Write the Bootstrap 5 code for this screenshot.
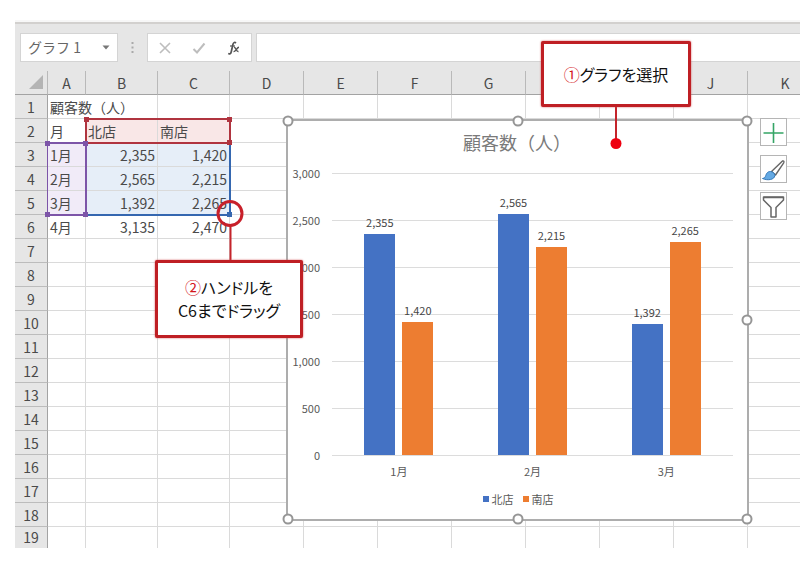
<!DOCTYPE html>
<html lang="ja">
<head>
<meta charset="utf-8">
<meta name="viewport" content="width=device-width, initial-scale=1">
<title>顧客数（人）</title>
<link href="https://cdn.jsdelivr.net/npm/bootstrap@5.3.0/dist/css/bootstrap.min.css" rel="stylesheet">
<style>
body { font-family: "Noto Sans CJK JP", sans-serif; font-size: 14px; color: #4a4a4a; background: #fff; }
.app { margin: 20px 0 15px 15px; background: #e6e6e6; overflow: hidden; }
.ribbon-edge { height: 4px; background: #f7f7f7; border-bottom: 2px solid #d2d0ce; }
.formula-row { padding: 9px 0 9px 5px; height: 47px; }
.field { background: #fff; border: 1px solid #d4d4d4; height: 29px; }
.name-box { width: 98px; }
.name-box input { width: 74px; padding: 0 0 0 7px; font-size: 14px; line-height: 27px; color: #666; }
.fx-box { width: 105px; }
.plain { border: 0; background: transparent; padding: 0; outline: 0; }
.grip { width: 29px; }
.formula { margin-left: 4px; min-width: 0; border-right: 0; border-radius: 0; padding: 0 8px; }

.sheet { background: #fff; }
.grid { table-layout: fixed; width: 100%; border-collapse: separate; border-spacing: 0; }
.grid th, .grid td { height: 24px; padding: 0 2px; line-height: 22px; border-right: 1px solid #dadada; border-bottom: 1px solid #dadada; white-space: nowrap; overflow: visible; }
.grid th { background: #e6e6e6; font-weight: 400; text-align: center; color: #4a4a4a; }
.grid thead th { border-bottom-color: #a3a3a3; border-right-color: #b9b9b9; }
.grid tbody th { border-right-color: #a3a3a3; border-bottom-color: #bcbcbc; }
.grid tr > :last-child { border-right: 0; }
.grid tbody tr:last-child > * { height: 21px; line-height: 21px; border-bottom: 0; }
.grid .num { text-align: right; }
.grid .no-edge { border-right-color: transparent; }
.c-head { width: 33px; } .c-a { width: 38px; } .c-b { width: 72px; } .c-std { width: 74px; }
.fill-name { background: #f9e7e7; }
.fill-cat { background: #f1ebf8; }
.fill-val { background: #e6eef8; }

.range { position: absolute; border: 2px solid; }
.range i { position: absolute; width: 5px; height: 5px; background: currentColor; }
.range .tl { left: -3px; top: -3px; } .range .tr { right: -3px; top: -3px; }
.range .bl { left: -3px; bottom: -3px; } .range .br { right: -3px; bottom: -3px; }
.range-cat { left: 32px; top: 71px; width: 40px; height: 74px; color: #7d55a8; border-left-width: 1px; }
.range-val { left: 70px; top: 71px; width: 146px; height: 74px; color: #3567b0; border-left: 0; }
.range-name { left: 70px; top: 47px; width: 146px; height: 26px; color: #b0343f; }

.chart { position: absolute; left: 271px; top: 48px; width: 463px; background: #fff; border: 2px solid #adadad; font-size: 11px; line-height: 16px; color: #595959; padding: 9px 14px 12px 1px; }
.chart-title { font-size: 18px; font-weight: 400; line-height: 24px; margin: 0 0 11px 12px; color: #7a7a7a; }
.y-axis { width: 31px; height: 298px; }
.plot { margin: 8px 0 7px 12px; }
.plot > * { grid-area: 1 / 1; }
.rule { height: 47px; border-top: 1px solid #dcdcdc; }
.rule:last-child { height: 1px; }
.bars { height: 282px; }
.cluster { gap: 7px; }
.bar-slot { width: 31px; height: 100%; }
.bar-value { margin-bottom: 4px; color: #454545; }
.bar { width: 31px; }
.north { background: #4472c4; } .south { background: #ed7d31; }
.x-axis { margin-left: 43px; }
.legend-row { margin: 12px 0 0 14px; gap: 9px; }
.key { width: 6px; height: 6px; margin-right: 3px; }
.knob { position: absolute; width: 11px; height: 11px; border: 2px solid #969696; border-radius: 50%; background: #fff; transform: translate(-50%, -50%); }

.chart-tools { position: absolute; left: 745px; top: 47px; gap: 9px; }
.chart-tools button { width: 27px; height: 28px; padding: 0; border: 1px solid #b5b5b5; border-radius: 0; background: #fff; line-height: 0; }

.callout { position: absolute; background: #fff; border: 3px solid #bf1f24; border-radius: 2px; box-shadow: 0 0 2px #d05055; color: #111; font-size: 16px; line-height: 23px; font-feature-settings: "palt"; text-align: center; }
.callout b { font-weight: 400; color: #d3161c; }
.callout-1 { left: 541px; top: 41px; width: 150px; height: 66px; }
.callout-2 { left: 155px; top: 260px; width: 148px; height: 78px; }
.pointer { position: absolute; pointer-events: none; }
.pointer-1 { left: 608px; top: 106px; }
.pointer-2 { left: 215px; top: 198px; }
</style>
<script src="https://cdn.jsdelivr.net/npm/bootstrap@5.3.0/dist/js/bootstrap.bundle.min.js"></script>
</head>
<body>
<main class="position-relative overflow-hidden">
<div class="app">
  <div class="ribbon-edge"></div>
  <div class="formula-row d-flex align-items-start">
    <div class="field name-box d-flex align-items-center">
      <input class="plain" type="text" value="グラフ 1" aria-label="名前ボックス">
      <button class="plain flex-fill d-flex justify-content-center" type="button" aria-label="名前の一覧">
        <svg width="8" height="5" viewBox="0 0 8 5"><path d="M.5.5h7L4 4.5z" fill="#777"/></svg>
      </button>
    </div>
    <svg class="grip" height="29" viewBox="0 0 29 29"><path d="M14.5 9v12" stroke="#aaa" stroke-width="2" stroke-dasharray="2 2.5"/></svg>
    <div class="field fx-box d-flex align-items-center justify-content-around">
      <button class="plain d-flex" type="button" aria-label="キャンセル"><svg width="14" height="14" viewBox="0 0 14 14"><path d="M2 2l10 10M12 2L2 12" stroke="#bdbdbd" stroke-width="1.6"/></svg></button>
      <button class="plain d-flex" type="button" aria-label="入力"><svg width="14" height="14" viewBox="0 0 14 14"><path d="M1.500 8l3.500 3.500L12.500 2.500" fill="none" stroke="#bdbdbd" stroke-width="2"/></svg></button>
      <button class="plain d-flex" type="button" aria-label="関数の挿入"><svg width="14" height="14" viewBox="0 0 14 14" fill="none" stroke="#555"><path d="M9 2C7.500.8 6.300 1.700 5.900 3.500L4.200 11c-.4 1.700-1.500 2.200-3 1.500" stroke-width="1.700"/><path d="M3 5h5" stroke-width="1.200"/><path d="M7 6.500c2-.8 2 4.500 4.500 4M12 6.300c-2 0-3.500 4.700-5.500 4.300" stroke-width="1.400"/></svg></button>
    </div>
    <input class="field formula flex-fill" type="text" aria-label="数式バー">
  </div>

  <div class="sheet position-relative">
    <table class="grid">
      <colgroup><col class="c-head"><col class="c-a"><col class="c-b"><col class="c-b"><col class="c-std"><col class="c-std"><col class="c-std"><col class="c-std"><col class="c-std"><col class="c-std"><col class="c-std"><col></colgroup>
      <thead><tr>
        <th aria-label="すべて選択"><svg class="d-block ms-auto" width="17" height="15" viewBox="0 0 17 15"><path d="M15 0v14H1z" fill="#b4b4b4"/></svg></th>
        <th>A</th><th>B</th><th>C</th><th>D</th><th>E</th><th>F</th><th>G</th><th aria-label="H"></th><th aria-label="I"></th><th>J</th><th class="ps-4">K</th>
      </tr></thead>
      <tbody id="cells">
        <tr><th>1</th><td class="no-edge">顧客数（人）</td><td></td><td></td></tr>
        <tr><th>2</th><td>月</td><td class="fill-name">北店</td><td class="fill-name">南店</td></tr>
        <tr><th>3</th><td class="fill-cat">1月</td><td class="fill-val num">2,355</td><td class="fill-val num">1,420</td></tr>
        <tr><th>4</th><td class="fill-cat">2月</td><td class="fill-val num">2,565</td><td class="fill-val num">2,215</td></tr>
        <tr><th>5</th><td class="fill-cat">3月</td><td class="fill-val num">1,392</td><td class="fill-val num">2,265</td></tr>
        <tr><th>6</th><td>4月</td><td class="num">3,135</td><td class="num">2,470</td></tr>
      </tbody>
    </table>

    <div class="range range-val"><i class="br"></i></div>
    <div class="range range-name"><i class="tl"></i><i class="tr"></i><i class="br"></i></div>
    <div class="range range-cat"><i class="tl"></i><i class="bl"></i><i class="tr"></i><i class="br"></i></div>

    <section class="chart" aria-label="顧客数グラフ">
      <h1 class="chart-title text-center">顧客数（人）</h1>
      <div class="d-flex">
        <div class="y-axis d-flex flex-column justify-content-between text-end">
          <span>3,000</span><span>2,500</span><span>2,000</span><span>1,500</span><span>1,000</span><span>500</span><span>0</span>
        </div>
        <div class="plot d-grid flex-fill">
          <div><div class="rule"></div><div class="rule"></div><div class="rule"></div><div class="rule"></div><div class="rule"></div><div class="rule"></div><div class="rule"></div></div>
          <div class="bars row g-0" id="bars"></div>
        </div>
      </div>
      <div class="x-axis row g-0 text-center"><span class="col">1月</span><span class="col">2月</span><span class="col">3月</span></div>
      <div class="legend-row d-flex justify-content-center">
        <span class="d-flex align-items-center"><span class="key north"></span>北店</span>
        <span class="d-flex align-items-center"><span class="key south"></span>南店</span>
      </div>
      <span class="knob start-0 top-0"></span><span class="knob start-50 top-0"></span><span class="knob start-100 top-0"></span>
      <span class="knob start-0 top-50"></span><span class="knob start-100 top-50"></span>
      <span class="knob start-0 top-100"></span><span class="knob start-50 top-100"></span><span class="knob start-100 top-100"></span>
    </section>

    <div class="chart-tools d-flex flex-column">
      <button type="button" aria-label="グラフ要素"><svg width="25" height="25" viewBox="0 0 25 25"><path d="M12.500 3v20M2.500 13h20" stroke="#35a566" stroke-width="1.600"/></svg></button>
      <button type="button" aria-label="グラフ スタイル"><svg width="25" height="25" viewBox="0 0 25 25"><path d="M21.500 4c1.500-.5 1.700.7 1.200 1.800L14.500 18l-4-3.500z" fill="#fff" stroke="#666" stroke-width="1.400" stroke-linejoin="round"/><path d="M9.500 14.500c2.500.2 4.500 2 4.300 4.200-.3 3.800-6.800 5.300-12.300 2.800 3.500-.7 2.800-3 4.300-5.200.9-1.200 2-1.900 3.700-1.800z" fill="#64a9e3" stroke="#3478b8"/></svg></button>
      <button type="button" aria-label="グラフ フィルター"><svg width="25" height="25" viewBox="0 0 25 25"><path d="M2.500 3h20v3l-7.500 7.500V23h-5v-9.500L2.500 6z" fill="#fff" stroke="#666" stroke-width="1.500" stroke-linejoin="round"/><path d="M3 3.500h19" stroke="#666" stroke-width="1.500"/></svg></button>
    </div>
  </div>
</div>

<svg class="pointer pointer-1" width="16" height="46" viewBox="0 0 16 46"><path d="M8 0v37" stroke="#c4242b" stroke-width="2"/><circle cx="8" cy="37.500" r="5.500" fill="#ee0010"/></svg>
<div class="callout callout-1 d-flex align-items-center justify-content-center"><span><b>①</b>グラフを選択</span></div>
<svg class="pointer pointer-2" width="30" height="64" viewBox="0 0 30 64"><circle cx="15" cy="15.500" r="12" fill="none" stroke="#c8202a" stroke-width="3"/><path d="M15.500 28v36" stroke="#c4242b" stroke-width="2"/></svg>
<div class="callout callout-2 d-flex align-items-center justify-content-center"><span><b>②</b>ハンドルを<br>C6までドラッグ</span></div>
</main>

<script>
// Complete the sheet: 19 rows, 11 columns
const cells = document.getElementById('cells');
for (let r = 0; r < 19; r++) {
  const row = cells.rows[r] || cells.insertRow();
  if (!row.cells.length) {
    const th = document.createElement('th');
    th.textContent = r + 1;
    row.append(th);
  }
  while (row.cells.length < 12) row.insertCell();
}

// Clustered columns, scaled to the 3,000 axis maximum
const data = [[2355, 1420], [2565, 2215], [1392, 2265]];
document.getElementById('bars').innerHTML = data.map(pair =>
  '<div class="cluster col h-100 d-flex justify-content-center">' + pair.map((v, i) =>
    `<div class="bar-slot d-flex flex-column justify-content-end align-items-center">
      <span class="bar-value">${v.toLocaleString('en-US')}</span>
      <div class="bar flex-shrink-0 ${i ? 'south' : 'north'}" style="height:${v / 30}%"></div>
    </div>`).join('') + '</div>').join('');
</script>
</body>
</html>
